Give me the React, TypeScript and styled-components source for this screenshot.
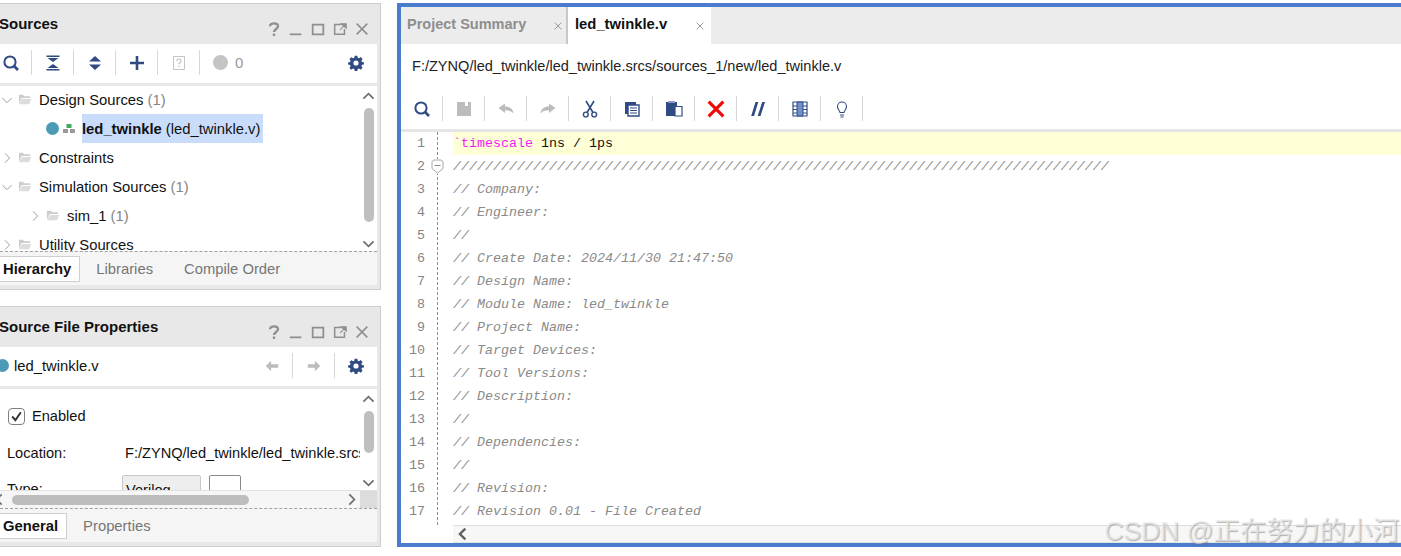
import React from 'react';
import styled, { createGlobalStyle } from 'styled-components';

const NAVY = '#2f4b82';
const MUTED = '#bcbcbc';

const GlobalStyle = createGlobalStyle`
  html, body {
    margin: 0;
    padding: 0;
    background: #fff;
  }
  body {
    font-family: "Liberation Sans", Arial, sans-serif;
    color: #111;
  }
`;

const Page = styled.div`
  width: 1401px;
  height: 556px;
  display: flex;
  align-items: flex-start;
  overflow: hidden;
  background: #fff;
`;

const LeftColumn = styled.div`
  width: 381px;
  flex: none;
  display: flex;
  flex-direction: column;
  gap: 16px;
  padding-top: 3px;
`;

const Panel = styled.section<{ $height: number }>`
  height: ${(p) => p.$height}px;
  box-sizing: border-box;
  display: flex;
  flex-direction: column;
  padding-right: 3px;
  padding-bottom: 4px;
  background: #e8e8e8;
  border: 1px solid #cdcdcd;
  border-left: none;
  overflow: hidden;
`;

const PanelHeader = styled.header`
  height: 40px;
  flex: none;
  display: flex;
  align-items: flex-start;
  justify-content: space-between;
`;

const PanelTitle = styled.h2`
  margin: 11px 0 0 -1px;
  font-size: 15px;
  line-height: 18px;
  font-weight: 700;
  color: #111;
`;

const WindowControls = styled.div`
  display: flex;
  margin-top: 15px;
  margin-right: 4px;
`;

const WindowControl = styled.span`
  width: 22px;
  height: 20px;
  display: flex;
  align-items: center;
  justify-content: center;
`;

const Toolbar = styled.div`
  height: 39px;
  box-sizing: border-box;
  padding-bottom: 2px;
  flex: none;
  display: flex;
  align-items: center;
  background: #fff;
  margin-bottom: 3px;
`;

const ToolButton = styled.span<{ $first?: boolean; $plain?: boolean }>`
  width: 42px;
  height: 25px;
  box-sizing: border-box;
  flex: none;
  display: flex;
  align-items: center;
  justify-content: center;
  border-right: ${(p) => (p.$plain ? 'none' : '1px solid #d8d8d8')};
  margin-left: ${(p) => (p.$first ? '-10px' : '0')};
`;

const ToolCount = styled.span`
  font-size: 15px;
  color: #9a9a9a;
  margin-left: 7px;
`;

const ToolSpacer = styled.div`
  flex: 1;
`;

const StatusCell = styled.span`
  display: flex;
  align-items: center;
  margin-left: 13px;
`;

const Body = styled.div`
  flex: 1;
  min-height: 0;
  display: flex;
  background: #fff;
  overflow: hidden;
`;

const TreeList = styled.ul`
  flex: 1;
  min-width: 0;
  margin: -1px 0 0;
  padding: 0;
  list-style: none;
  overflow: hidden;
`;

const TreeRow = styled.li<{ $depth: number }>`
  height: 29px;
  display: flex;
  align-items: center;
  font-size: 14.8px;
  padding-left: ${(p) => p.$depth * 28}px;
  white-space: nowrap;
`;

const TreeChevron = styled.span`
  width: 14px;
  height: 12px;
  display: flex;
  align-items: center;
  justify-content: center;
  margin-right: 4px;
`;

const TreeLabel = styled.span`
  margin-left: 7px;
`;

const Count = styled.span`
  color: #858585;
`;

const LeafDot = styled.span`
  width: 13px;
  height: 13px;
  margin-left: 46px;
  margin-right: 4px;
  border-radius: 50%;
  background: #4b9ab6;
  flex: none;
`;

const SelectedLabel = styled.span`
  height: 29px;
  display: flex;
  align-items: center;
  padding-right: 3px;
  margin-left: 7px;
  background: #c9ddfb;
  b {
    margin-right: 4px;
  }
`;

const VScroll = styled.div`
  width: 17px;
  flex: none;
  box-sizing: border-box;
  padding-top: 2px;
  display: flex;
  flex-direction: column;
  align-items: center;
  background: #fff;
`;

const ScrollArrow = styled.span`
  height: 16px;
  flex: none;
  display: flex;
  align-items: center;
  justify-content: center;
`;

const VThumb = styled.div<{ $height: number }>`
  width: 10px;
  height: ${(p) => p.$height}px;
  margin-top: 4px;
  border-radius: 5px;
  background: #bfbfbf;
`;

const VTrack = styled.div`
  flex: 1;
`;

const TabStrip = styled.nav`
  height: 34px;
  flex: none;
  display: flex;
  align-items: center;
  gap: 16px;
  background: #f5f5f5;
  border-top: 1px dashed #a0a0a0;
  box-sizing: border-box;
`;

const StripTab = styled.span<{ $active?: boolean; $gapAfter?: number }>`
  height: 26px;
  display: flex;
  align-items: center;
  box-sizing: border-box;
  font-size: 14.8px;
  padding: ${(p) => (p.$active ? '0 8px 0 3px' : '0')};
  margin-left: ${(p) => (p.$active ? '-1px' : '0')};
  margin-right: ${(p) => p.$gapAfter ?? 0}px;
  font-weight: ${(p) => (p.$active ? 700 : 400)};
  color: ${(p) => (p.$active ? '#111' : '#757575')};
  background: ${(p) => (p.$active ? '#fff' : 'transparent')};
  border: ${(p) => (p.$active ? '1px solid #cfcfcf' : 'none')};
`;

const FileDot = styled.span`
  width: 13px;
  height: 13px;
  margin-left: -4px;
  margin-right: 5px;
  border-radius: 50%;
  background: #4b9ab6;
  flex: none;
`;

const FileName = styled.span`
  font-size: 14.8px;
`;

const PropsColumn = styled.div`
  flex: 1;
  min-width: 0;
  display: flex;
  flex-direction: column;
  overflow: hidden;
`;

const PropsContent = styled.div`
  flex: 1;
  min-width: 0;
  min-height: 0;
  overflow: hidden;
  font-size: 14.6px;
  padding: 18px 0 0 7px;
`;

const CheckRow = styled.label`
  display: flex;
  align-items: center;
  gap: 7px;
  height: 18px;
  margin-left: 1px;
`;

const CheckBox = styled.span`
  width: 17px;
  height: 17px;
  box-sizing: border-box;
  border: 1.5px solid #808080;
  border-radius: 4px;
  display: flex;
  align-items: center;
  justify-content: center;
  background: #fff;
`;

const PropRow = styled.div`
  display: flex;
  align-items: flex-start;
  white-space: nowrap;
  margin-top: 18px;
  height: 20px;
  line-height: 20px;
`;

const TypeRow = styled(PropRow)`
  margin-top: 12px;
  height: 30px;
  line-height: 29px;
`;

const PropName = styled.span`
  width: 118px;
  flex: none;
`;

const TypeSelect = styled.span`
  width: 79px;
  height: 30px;
  box-sizing: border-box;
  margin-left: -3px;
  padding-left: 3px;
  flex: none;
  background: #eeeeee;
  border: 1px solid #c8c8c8;
  border-radius: 2px;
`;

const TypeButton = styled.span`
  width: 32px;
  height: 30px;
  box-sizing: border-box;
  margin-left: 8px;
  flex: none;
  border: 1px solid #8a8a8a;
  border-radius: 2px;
  background: #fff;
`;

const HScroll = styled.div`
  height: 18px;
  flex: none;
  display: flex;
  align-items: center;
  background: #f6f6f6;
  border-top: 1px solid #e2e2e2;
  box-sizing: border-box;
  position: relative;
`;

const HThumb = styled.div`
  width: 237px;
  height: 10px;
  margin-left: 12px;
  border-radius: 5px;
  background: #bdbdbd;
`;

const HArrowEnd = styled.span`
  margin-left: auto;
  margin-right: 2px;
  display: flex;
`;

const HArrowStart = styled.span`
  position: absolute;
  left: -7px;
  top: 2px;
  display: flex;
`;

const HCorner = styled.div`
  width: 17px;
  flex: none;
  align-self: stretch;
  background: #dcdcdc;
`;

const EditorPane = styled.main`
  position: relative;
  flex: none;
  width: 1008px;
  height: 544px;
  margin-left: 16px;
  margin-top: 3px;
  box-sizing: border-box;
  border: 4px solid #4a7bcc;
  display: flex;
  flex-direction: column;
  background: #fff;
`;

const EditorTabs = styled.div`
  height: 37px;
  flex: none;
  display: flex;
  background: #ececec;
`;

const EditorTab = styled.div<{ $active?: boolean; $width: number }>`
  width: ${(p) => p.$width}px;
  box-sizing: border-box;
  display: flex;
  align-items: center;
  justify-content: space-between;
  padding: 0 ${(p) => (p.$active ? 6 : 3)}px 0 ${(p) => (p.$active ? 7 : 6)}px;
  font-size: ${(p) => (p.$active ? 14.8 : 14.5)}px;
  font-weight: 700;
  color: ${(p) => (p.$active ? '#111' : '#8e8e8e')};
  background: ${(p) => (p.$active ? '#fff' : 'transparent')};
  border-left: ${(p) => (p.$active ? '2px solid #c8c8c8' : 'none')};
`;

const TabTitle = styled.span`
  margin-bottom: 3px;
`;

const PathBar = styled.div`
  height: 44px;
  flex: none;
  display: flex;
  align-items: center;
  padding-left: 11px;
  font-size: 14.55px;
  color: #222;
`;

const EditorToolbar = styled(Toolbar)`
  height: 44px;
  margin: 0;
  padding-bottom: 0;
  border-bottom: 3px solid #e6e6e6;
`;

const EditorBody = styled.div`
  flex: 1;
  min-height: 0;
  display: flex;
  overflow: hidden;
`;

const Gutter = styled.div`
  width: 37px;
  flex: none;
  box-sizing: border-box;
  border-right: 1px dashed #8c8c8c;
`;

const LineNumber = styled.div`
  position: relative;
  height: 23px;
  line-height: 23px;
  padding-right: 12px;
  text-align: right;
  font-family: "Liberation Mono", monospace;
  font-size: 13.33px;
  color: #858585;
`;

const FoldMark = styled.span`
  position: absolute;
  right: -7px;
  top: 4px;
  display: flex;
  background: #fff;
`;

const CodeColumn = styled.div`
  flex: 1;
  min-width: 0;
  margin-left: 15px;
  overflow: hidden;
`;

const CodeLine = styled.div<{ $current?: boolean }>`
  height: 23px;
  line-height: 23px;
  white-space: pre;
  font-family: "Liberation Mono", monospace;
  font-size: 13.33px;
  background: ${(p) => (p.$current ? '#ffffd7' : 'transparent')};
  color: #8a8a8a;
  font-style: ${(p) => (p.$current ? 'normal' : 'italic')};
`;

const Keyword = styled.span`
  color: #f51af5;
`;

const Plain = styled.span`
  color: #111;
`;

const EditorHScroll = styled.div`
  height: 18px;
  flex: none;
  margin-left: 52px;
  box-sizing: border-box;
  display: flex;
  align-items: center;
  padding-left: 3px;
  background: #f7f7f7;
  border-top: 1px solid #dedede;
  border-bottom: 1px solid #e4e4e4;
`;

const Watermark = styled.div`
  position: absolute;
  right: 2px;
  bottom: -3px;
  font-family: "Liberation Sans", "Noto Sans CJK SC", sans-serif;
  font-size: 26.5px;
  line-height: 30px;
  white-space: nowrap;
  color: rgba(236, 236, 236, 0.7);
  text-shadow: 1px 1px 1px rgba(110, 110, 110, 0.5);
`;

const Icon = ({ size = 18, children }: { size?: number; children: React.ReactNode }) => (
  <svg width={size} height={size} viewBox="0 0 18 18" fill="none">
    {children}
  </svg>
);

const Search = () => (
  <Icon>
    <circle cx="8" cy="8" r="5.6" stroke={NAVY} strokeWidth="2" />
    <path d="M12 12l4 4" stroke={NAVY} strokeWidth="2.6" />
  </Icon>
);

const Collapse = () => (
  <Icon>
    <path d="M2.5 2.2h13M2.5 15.8h13" stroke={NAVY} strokeWidth="1.5" />
    <path d="M3.5 4h11L9 8zM3.5 14h11L9 10z" fill={NAVY} />
  </Icon>
);

const Expand = () => (
  <Icon>
    <path d="M9 2l6 5.5H3zM9 16l-6-5.5h12z" fill={NAVY} />
    <path d="M3 9h12" stroke="#fff" />
  </Icon>
);

const Plus = () => (
  <Icon>
    <path d="M9 2v14M2 9h14" stroke={NAVY} strokeWidth="2.6" />
  </Icon>
);

const Unknown = () => (
  <Icon>
    <path d="M3.5 2.5h11v13h-11z" stroke="#c4c4c4" strokeWidth="1" />
    <path d="M7 7c0-2.6 4-2.6 4 0 0 1.5-2 1.5-2 3.2M9 11.6v1.4" stroke="#bdbdbd" strokeWidth="1.1" />
  </Icon>
);

const Gear = () => (
  <Icon>
    <path
      d="M7.5 1.5h3l.4 2.2 1.4.6 1.9-1.3 2.1 2.1-1.3 1.9.6 1.4 2.2.4v2.4l-2.2.4-.6 1.4 1.3 1.9-2.1 2.1-1.9-1.3-1.4.6-.4 2.2h-3l-.4-2.2-1.4-.6-1.9 1.3L1.7 15l1.3-1.9-.6-1.4L.2 11.3V8.9l2.2-.4.6-1.4L1.7 5.2l2.1-2.1 1.9 1.3 1.4-.6z"
      fill={NAVY}
      transform="translate(.9 .4) scale(.9)"
    />
    <circle cx="9" cy="9" r="2.6" fill="#fff" />
  </Icon>
);

const Help = () => (
  <Icon size={16}>
    <path d="M4.5 6c0-4.5 9-4.5 9 0 0 3-4.5 3-4.5 6.5M9 14v3" stroke="#8f8f8f" strokeWidth="2.6" />
  </Icon>
);

const Minimize = () => (
  <Icon size={16}>
    <path d="M2 15h13" stroke="#8f8f8f" strokeWidth="2" />
  </Icon>
);

const Restore = () => (
  <Icon size={16}>
    <path d="M3 4h12v11H3z" stroke="#8f8f8f" strokeWidth="2" />
  </Icon>
);

const PopOut = () => (
  <Icon size={16}>
    <path d="M10 4H3v11h11V9" stroke="#8f8f8f" strokeWidth="1.7" />
    <path d="M10 3h6v5zM13 6l-4 4" stroke="#8f8f8f" strokeWidth="1.2" fill="#8f8f8f" />
  </Icon>
);

const Cross = ({ size = 16, color = '#8f8f8f', weight = 1.8 }: { size?: number; color?: string; weight?: number }) => (
  <Icon size={size}>
    <path d="M3 3l12 12M15 3L3 15" stroke={color} strokeWidth={weight} />
  </Icon>
);

const Chevron = ({ dir, color = '#8f8f8f', size = 12, weight = 1.3 }: { dir: 'up' | 'down' | 'left' | 'right'; color?: string; size?: number; weight?: number }) => {
  const d = { up: 'M2 12l7-7 7 7', down: 'M2 6l7 7 7-7', left: 'M12 2L5 9l7 7', right: 'M6 2l7 7-7 7' }[dir];
  return (
    <Icon size={size}>
      <path d={d} stroke={color} strokeWidth={weight} />
    </Icon>
  );
};

const Folder = () => (
  <svg width="14" height="13" viewBox="0 0 15 13" fill="none">
    <path d="M1 1.5h4.5l1 1.5H13v2H4L1 11z" fill="#cdcdcd" />
    <path d="M4.5 6H14l-2 5.5H1z" fill="#dcdcdc" />
  </svg>
);

const Hierarchy = () => (
  <svg width="12" height="9" viewBox="0 0 12 9">
    <rect x="3.5" y="0" width="5" height="4" fill="#3eaa5c" />
    <rect x="0" y="5" width="5" height="4" fill="#9a9a9a" />
    <rect x="7" y="5" width="5" height="4" fill="#9a9a9a" />
  </svg>
);

const GrayDot = () => (
  <svg width="15" height="15" viewBox="0 0 15 15">
    <circle cx="7.5" cy="7.5" r="7.5" fill="#c4c4c4" />
  </svg>
);

const Arrow = ({ flip }: { flip?: boolean }) => (
  <Icon size={16}>
    <path d={flip ? 'M2 7h8V3l6 6-6 6v-4H2z' : 'M16 7H8V3L2 9l6 6v-4h8z'} fill={MUTED} />
  </Icon>
);

const Save = () => (
  <Icon>
    <path d="M2 2h14v14H2z" fill={MUTED} />
    <path d="M10 2h3v4h-3z" fill="#fff" />
  </Icon>
);

const Undo = ({ flip }: { flip?: boolean }) => (
  <Icon>
    <g transform={flip ? 'translate(18 0) scale(-1 1)' : undefined}>
      <path d="M1.5 8L8 3.5V6.5C13 6.5 16 9 16.5 13.5 14.5 11 12 10.2 8 10.2V13z" fill={MUTED} />
    </g>
  </Icon>
);

const Scissors = () => (
  <Icon>
    <path d="M5 1l7 11.5M13 1L6 12.5" stroke={NAVY} strokeWidth="1.6" />
    <circle cx="4.8" cy="14.5" r="2.4" stroke={NAVY} strokeWidth="1.4" />
    <circle cx="13.2" cy="14.5" r="2.4" stroke={NAVY} strokeWidth="1.4" />
  </Icon>
);

const Copy = () => (
  <Icon>
    <path d="M2 2h11v12H2z" fill={NAVY} />
    <path d="M5 5h11v11H5z" fill="#fff" stroke={NAVY} strokeWidth="1.4" />
    <path d="M7 8h7M7 10.5h7M7 13h7" stroke={NAVY} />
  </Icon>
);

const Paste = () => (
  <Icon>
    <path d="M1 2h11v14H1z" fill={NAVY} />
    <path d="M3 1h7v2H3z" fill="#8b9dc0" />
    <path d="M10 6.5h7V16h-7z" fill="#fff" stroke={NAVY} strokeWidth="1.2" />
  </Icon>
);

const Comment = () => (
  <Icon>
    <path d="M6.5 2h2.8L5 16H2.2zM13.2 2H16l-4.5 14H8.7z" fill={NAVY} />
  </Icon>
);

const Filmstrip = () => (
  <Icon>
    <path d="M2 2h14v14H2z" fill="#fff" stroke={NAVY} strokeWidth="1.2" />
    <path d="M6 2h6v14H6z" fill="#6f90cb" stroke={NAVY} />
    <path d="M2 6h4M2 9.5h4M2 13h4M12 6h4M12 9.5h4M12 13h4" stroke={NAVY} />
  </Icon>
);

const Bulb = () => (
  <Icon>
    <path d="M7 12.5C6.5 10 4.5 9.5 4.5 6.5a4.5 4.5 0 0 1 9 0c0 3-2 3.5-2.5 6z" stroke={NAVY} strokeWidth="1.1" />
    <path d="M7 15h4M7.5 17h3" stroke={NAVY} strokeWidth="1.2" />
  </Icon>
);

const FoldGlyph = () => (
  <svg width="13" height="15" viewBox="0 0 13 15" fill="none">
    <path d="M1 2.5L3 1h7l2 1.5v7L6.5 14 1 9.5z" stroke="#a8a8a8" fill="#fff" />
    <path d="M3.5 6.5h6" stroke="#8c8c8c" />
  </svg>
);

const Controls = () => (
  <WindowControls>
    <WindowControl><Help /></WindowControl>
    <WindowControl><Minimize /></WindowControl>
    <WindowControl><Restore /></WindowControl>
    <WindowControl><PopOut /></WindowControl>
    <WindowControl><Cross /></WindowControl>
  </WindowControls>
);

const TREE = [
  { depth: 0, open: true, label: 'Design Sources', count: 1 },
  { depth: 0, open: false, label: 'Constraints' },
  { depth: 0, open: true, label: 'Simulation Sources', count: 1 },
  { depth: 1, open: false, label: 'sim_1', count: 1 },
  { depth: 0, open: false, label: 'Utility Sources' },
];

const COMMENTS = [
  '/'.repeat(82),
  '// Company:',
  '// Engineer:',
  '//',
  '// Create Date: 2024/11/30 21:47:50',
  '// Design Name:',
  '// Module Name: led_twinkle',
  '// Project Name:',
  '// Target Devices:',
  '// Tool Versions:',
  '// Description:',
  '//',
  '// Dependencies:',
  '//',
  '// Revision:',
  '// Revision 0.01 - File Created',
];

const EDITOR_TOOLS = [
  <Search key="search" />,
  <Save key="save" />,
  <Undo key="undo" />,
  <Undo key="redo" flip />,
  <Scissors key="cut" />,
  <Copy key="copy" />,
  <Paste key="paste" />,
  <Cross key="delete" size={22} color="#ee0a0a" weight={2.6} />,
  <Comment key="comment" />,
  <Filmstrip key="columns" />,
  <Bulb key="bulb" />,
];

function TreeItem({ depth, open, label, count }: (typeof TREE)[number]) {
  return (
    <TreeRow $depth={depth}>
      <TreeChevron>
        <Chevron dir={open ? 'down' : 'right'} />
      </TreeChevron>
      <Folder />
      <TreeLabel>
        {label} {count !== undefined && <Count>({count})</Count>}
      </TreeLabel>
    </TreeRow>
  );
}

function SourcesPanel() {
  const [first, ...rest] = TREE;
  return (
    <Panel $height={287}>
      <PanelHeader>
        <PanelTitle>Sources</PanelTitle>
        <Controls />
      </PanelHeader>
      <Toolbar>
        <ToolButton $first><Search /></ToolButton>
        <ToolButton><Collapse /></ToolButton>
        <ToolButton><Expand /></ToolButton>
        <ToolButton><Plus /></ToolButton>
        <ToolButton><Unknown /></ToolButton>
        <StatusCell>
          <GrayDot />
          <ToolCount>0</ToolCount>
        </StatusCell>
        <ToolSpacer />
        <ToolButton $plain><Gear /></ToolButton>
      </Toolbar>
      <Body>
        <TreeList>
          <TreeItem {...first} />
          <TreeRow $depth={0}>
            <LeafDot />
            <Hierarchy />
            <SelectedLabel>
              <b>led_twinkle</b> (led_twinkle.v)
            </SelectedLabel>
          </TreeRow>
          {rest.map((item) => (
            <TreeItem key={item.label} {...item} />
          ))}
        </TreeList>
        <VScroll>
          <ScrollArrow><Chevron dir="up" color="#6e6e6e" size={13} weight={2.4} /></ScrollArrow>
          <VThumb $height={114} />
          <VTrack />
          <ScrollArrow><Chevron dir="down" color="#6e6e6e" size={13} weight={2.4} /></ScrollArrow>
        </VScroll>
      </Body>
      <TabStrip>
        <StripTab $active>Hierarchy</StripTab>
        <StripTab $gapAfter={15}>Libraries</StripTab>
        <StripTab>Compile Order</StripTab>
      </TabStrip>
    </Panel>
  );
}

function PropertiesPanel() {
  return (
    <Panel $height={241}>
      <PanelHeader>
        <PanelTitle>Source File Properties</PanelTitle>
        <Controls />
      </PanelHeader>
      <Toolbar>
        <FileDot />
        <FileName>led_twinkle.v</FileName>
        <ToolSpacer />
        <ToolButton><Arrow /></ToolButton>
        <ToolButton><Arrow flip /></ToolButton>
        <ToolButton $plain><Gear /></ToolButton>
      </Toolbar>
      <PropsColumn>
        <Body>
          <PropsContent>
            <CheckRow>
              <CheckBox>
                <Icon size={13}>
                  <path d="M3 9l4.5 5L15 3" stroke="#333" strokeWidth="2.6" />
                </Icon>
              </CheckBox>
              Enabled
            </CheckRow>
            <PropRow>
              <PropName>Location:</PropName>
              F:/ZYNQ/led_twinkle/led_twinkle.srcs/sources_1/new/led_twinkle.v
            </PropRow>
            <TypeRow>
              <PropName>Type:</PropName>
              <TypeSelect>Verilog</TypeSelect>
              <TypeButton />
            </TypeRow>
          </PropsContent>
          <VScroll>
            <ScrollArrow><Chevron dir="up" color="#6e6e6e" size={13} weight={2.4} /></ScrollArrow>
            <VThumb $height={42} />
            <VTrack />
            <ScrollArrow><Chevron dir="down" color="#6e6e6e" size={13} weight={2.4} /></ScrollArrow>
          </VScroll>
        </Body>
        <HScroll>
          <HArrowStart><Chevron dir="left" color="#6e6e6e" size={13} weight={2.4} /></HArrowStart>
          <HThumb />
          <HArrowEnd><Chevron dir="right" color="#6e6e6e" size={13} weight={2.4} /></HArrowEnd>
          <HCorner />
        </HScroll>
      </PropsColumn>
      <TabStrip>
        <StripTab $active>General</StripTab>
        <StripTab>Properties</StripTab>
      </TabStrip>
    </Panel>
  );
}

function Editor() {
  return (
    <EditorPane>
      <EditorTabs>
        <EditorTab $width={165}>
          <TabTitle>Project Summary</TabTitle>
          <Cross size={10} weight={1.6} />
        </EditorTab>
        <EditorTab $active $width={145}>
          <TabTitle>led_twinkle.v</TabTitle>
          <Cross size={10} weight={1.6} />
        </EditorTab>
      </EditorTabs>
      <PathBar>F:/ZYNQ/led_twinkle/led_twinkle.srcs/sources_1/new/led_twinkle.v</PathBar>
      <EditorToolbar>
        {EDITOR_TOOLS.map((tool) => (
          <ToolButton key={tool.key}>{tool}</ToolButton>
        ))}
      </EditorToolbar>
      <EditorBody>
        <Gutter>
          {Array.from({ length: 17 }, (_, i) => (
            <LineNumber key={i}>
              {i + 1}
              {i === 1 && (
                <FoldMark><FoldGlyph /></FoldMark>
              )}
            </LineNumber>
          ))}
        </Gutter>
        <CodeColumn>
          <CodeLine $current>
            <Keyword>`timescale</Keyword> <Plain>1ns / 1ps</Plain>
          </CodeLine>
          {COMMENTS.map((line, i) => (
            <CodeLine key={i}>{line}</CodeLine>
          ))}
        </CodeColumn>
      </EditorBody>
      <EditorHScroll>
        <Chevron dir="left" color="#5e5e5e" size={14} weight={3} />
      </EditorHScroll>
      <Watermark>CSDN @正在努力的小河</Watermark>
    </EditorPane>
  );
}

export default function App() {
  return (
    <>
      <GlobalStyle />
      <Page>
        <LeftColumn>
          <SourcesPanel />
          <PropertiesPanel />
        </LeftColumn>
        <Editor />
      </Page>
    </>
  );
}
